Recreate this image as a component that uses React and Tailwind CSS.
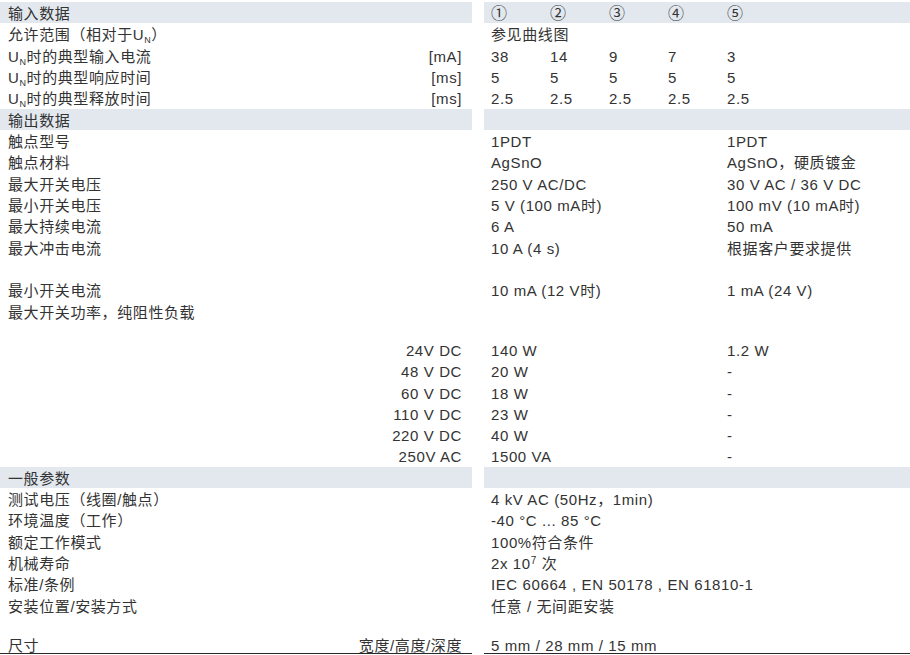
import React from 'react';

const font = "font-['Liberation_Sans','Noto_Sans_CJK_SC',sans-serif]";

// U with subscript N
const UN = () => (
  <span>
    U<sub className="text-[9px] relative top-[3px]">N</sub>
  </span>
);

const Five = ({ items, className = '' }) => (
  <div className={`flex ${className}`}>
    {items.map((v, i) => (
      <span key={i} className="w-[59px]">{v}</span>
    ))}
  </div>
);

const Two = ({ a, b }) => (
  <div className="flex">
    <span className="w-[236px]">{a}</span>
    <span>{b}</span>
  </div>
);

const Row = ({ label, unit, right, band, last, h = 'h-[21.33px]' }) => (
  <div className={`flex ${h}`}>
    <div
      className={`w-[472px] shrink-0 flex items-center justify-between pl-[8px] pr-[10px] pt-[3px] ${band ? 'bg-[#e2e8ee]' : ''} ${last ? 'border-b border-[#2a2a2a]' : ''}`}
    >
      <span>{label}</span>
      {unit && <span>{unit}</span>}
    </div>
    <div
      className={`flex-1 ml-[12px] flex items-center pl-[7px] pt-[3px] ${band ? 'bg-[#e2e8ee]' : ''} ${last ? 'border-b border-[#2a2a2a]' : ''}`}
    >
      {right}
    </div>
  </div>
);

const Spacer = ({ h }) => <div className={h} />;

export default function App() {
  return (
    <div className={`w-[910px] h-[655px] overflow-hidden bg-white pt-[2px] text-[15px] tracking-[0.6px] text-[#333] ${font}`}>
      {/* 输入数据 */}
      <Row band label="输入数据" right={<Five className="text-[16px]" items={['①', '②', '③', '④', '⑤']} />} />
      <Row label={<>允许范围（相对于<UN />）</>} right="参见曲线图" />
      <Row label={<><UN />时的典型输入电流</>} unit="[mA]" right={<Five items={['38', '14', '9', '7', '3']} />} />
      <Row label={<><UN />时的典型响应时间</>} unit="[ms]" right={<Five items={['5', '5', '5', '5', '5']} />} />
      <Row label={<><UN />时的典型释放时间</>} unit="[ms]" right={<Five items={['2.5', '2.5', '2.5', '2.5', '2.5']} />} />

      {/* 输出数据 */}
      <Row band label="输出数据" />
      <Row label="触点型号" right={<Two a="1PDT" b="1PDT" />} />
      <Row label="触点材料" right={<Two a="AgSnO" b="AgSnO，硬质镀金" />} />
      <Row label="最大开关电压" right={<Two a="250 V AC/DC" b="30 V AC / 36 V DC" />} />
      <Row label="最小开关电压" right={<Two a="5 V (100 mA时)" b="100 mV (10 mA时)" />} />
      <Row label="最大持续电流" right={<Two a="6 A" b="50 mA" />} />
      <Row label="最大冲击电流" right={<Two a="10 A (4 s)" b="根据客户要求提供" />} />
      <Spacer h="h-[21.33px]" />
      <Row label="最小开关电流" right={<Two a="10 mA (12 V时)" b="1 mA (24 V)" />} />
      <Row label="最大开关功率，纯阻性负载" />
      <Spacer h="h-[17px]" />
      <Row unit="24V DC" right={<Two a="140 W" b="1.2 W" />} />
      <Row unit="48 V DC" right={<Two a="20 W" b="-" />} />
      <Row unit="60 V DC" right={<Two a="18 W" b="-" />} />
      <Row unit="110 V DC" right={<Two a="23 W" b="-" />} />
      <Row unit="220 V DC" right={<Two a="40 W" b="-" />} />
      <Row unit="250V AC" right={<Two a="1500 VA" b="-" />} />

      {/* 一般参数 */}
      <Row band label="一般参数" />
      <Row label="测试电压（线圈/触点）" right="4 kV AC (50Hz，1min)" />
      <Row label="环境温度（工作）" right="-40 °C ... 85 °C" />
      <Row label="额定工作模式" right="100%符合条件" />
      <Row label="机械寿命" right={<span>2x 10<sup className="text-[10px]">7</sup> 次</span>} />
      <Row label="标准/条例" right="IEC 60664 , EN 50178 , EN 61810-1" />
      <Row label="安装位置/安装方式" right="任意 / 无间距安装" />
      <Spacer h="h-[21px]" />
      <Row last h="h-[16.5px]" label="尺寸" unit="宽度/高度/深度" right="5 mm / 28 mm / 15 mm" />
    </div>
  );
}
